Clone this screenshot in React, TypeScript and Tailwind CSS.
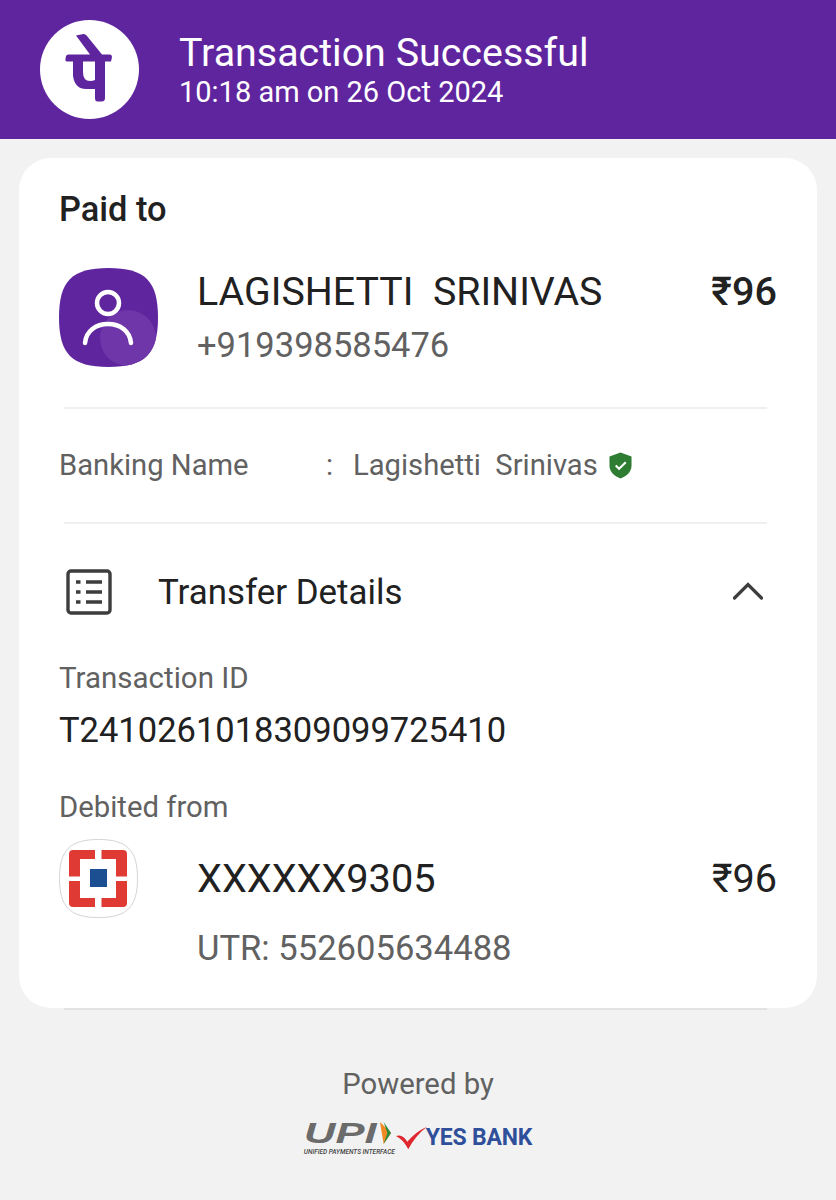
// ─── Logos ───────────────────────────────────────────────────────────────────

function PhonePeMark() {
  return (
    <svg viewBox="0 0 99 99" className="size-[99px]">
      <circle cx="49.5" cy="49.5" r="49.5" fill="#fff" />
      <path
        d="M36 15.5 L43.5 14 Q45.5 14 47 16 L62 34.5 L70 34.5 Q72 34.5 72 37 L71 41.5 Q70.5 41.5 65 41.5 L65 78 Q65 81.5 61.5 81.5 L57.5 81.5 Q55 81.5 55 78 L55 69 Q53 69 46 69 Q35 69 33 56 L33 41.5 L27 41.5 Q25 41.5 25.5 39 L26 36 Q26.5 34.5 28.5 34.5 L50 34.5 Z M43 41.5 L43 52 Q43 61 50 61 Q53 61 55 60 L55 41.5 Z"
        fill="#5f259f"
        fillRule="evenodd"
      />
    </svg>
  );
}

function PayeeAvatar() {
  return (
    <svg viewBox="0 0 99 99" className="size-[99px] shrink-0">
      <defs>
        <clipPath id="squircle">
          <path d="M49.5 0 C86 0 99 13 99 49.5 C99 86 86 99 49.5 99 C13 99 0 86 0 49.5 C0 13 13 0 49.5 0 Z" />
        </clipPath>
      </defs>
      <g clipPath="url(#squircle)">
        <rect width="99" height="99" fill="#5f259f" />
        <circle cx="69" cy="70" r="28" fill="#6f36a9" />
      </g>
      <circle cx="49" cy="35" r="11" fill="none" stroke="#fff" strokeWidth="4.5" />
      <path d="M26 75 C27 63 37 56 49 56 C61 56 71 63 72 75" fill="none" stroke="#fff" strokeWidth="4.5" strokeLinecap="round" />
    </svg>
  );
}

function HdfcLogo() {
  return (
    <svg viewBox="0 0 79 79" className="size-[79px] shrink-0">
      <path d="M39.5 .5 C68 .5 78.5 11 78.5 39.5 C78.5 68 68 78.5 39.5 78.5 C11 78.5 .5 68 .5 39.5 C.5 11 11 .5 39.5 .5 Z" fill="#fff" stroke="#d4d4d4" />
      <path d="M10 15 Q10 11 14 11 L36 11 L36 20 L21 20 L21 37.5 L10 37.5 Z" fill="#df3b34" />
      <path d="M68 15 Q68 11 64 11 L42.5 11 L42.5 20 L57 20 L57 37.5 L68 37.5 Z" fill="#df3b34" />
      <path d="M10 64 Q10 68 14 68 L36 68 L36 59 L21 59 L21 42 L10 42 Z" fill="#df3b34" />
      <path d="M68 64 Q68 68 64 68 L42.5 68 L42.5 59 L57 59 L57 42 L68 42 Z" fill="#df3b34" />
      <rect x="31" y="30" width="17" height="18" fill="#1c4f92" />
    </svg>
  );
}

function ListIcon() {
  return (
    <svg viewBox="0 0 46 46" className="size-[46px] shrink-0" fill="none" stroke="#3d3d3d">
      <rect x="2" y="2" width="42" height="42" rx="3" strokeWidth="3.4" />
      <path d="M10 13h4.5M10 23h4.5M10 33h4.5M20 13h16M20 23h16M20 33h16" strokeWidth="3.4" />
    </svg>
  );
}

function VerifiedShield() {
  return (
    <svg viewBox="0 0 24 28" className="h-[27px] w-[23px]">
      <path d="M12 .5 L23.5 4.5 L23.5 14 C23.5 21 18 25.5 12 27.5 C6 25.5 .5 21 .5 14 L.5 4.5 Z" fill="#2e7d32" />
      <path d="M7 14 L10.5 17.5 L17.5 10.5" fill="none" stroke="#fff" strokeWidth="2.2" />
    </svg>
  );
}

function CaretUp() {
  return (
    <svg viewBox="0 0 30 18" className="mb-[2px] h-[18px] w-[30px] shrink-0" fill="none" stroke="#3d3d3d" strokeWidth="3.2" strokeLinecap="round">
      <path d="M1.5 16 L15 2.5 L28.5 16" />
    </svg>
  );
}

function PartnerLogos() {
  return (
    <div className="flex items-center justify-center">
      <div className="flex w-[88px] flex-col items-start">
        <div className="flex w-full items-center justify-between">
          <span className="origin-left scale-x-[1.45] font-['Liberation_Sans',sans-serif] text-[30px] leading-[26px] font-bold text-[#6b6b6b] italic">UPI</span>
          <svg viewBox="0 0 14 26" className="h-[24px] w-[13px]">
            <path d="M1 1 L13 13 L5 25 Z" fill="#f08a24" />
            <path d="M5 1 L13 13 L5 25 L9 13 Z" fill="#2c8a3f" />
          </svg>
        </div>
        <span className="mt-[3px] text-[6.5px] leading-[7px] font-medium whitespace-nowrap text-[#444] italic">UNIFIED PAYMENTS INTERFACE</span>
      </div>
      <svg viewBox="0 0 34 24" className="ml-[4px] h-[24px] w-[32px]">
        <path d="M0 10 C5 8 9 11 12 16 C18 9 24 4 33 0 C25 6 18 14 13 24 C10 18 6 13 0 10 Z" fill="#e0262f" />
      </svg>
      <span className="-ml-[2px] text-[23px] leading-[28px] font-bold tracking-[-0.2px] text-[#2f4f9a]">YES BANK</span>
    </div>
  );
}

// ─── Page ────────────────────────────────────────────────────────────────────

function Divider({ tone = "bg-[#efefef]" }: { tone?: string }) {
  return <div className={`mr-[50px] ml-[45px] h-[2px] ${tone}`} />;
}

export default function App() {
  return (
    <div className="flex h-[1200px] w-[836px] flex-col overflow-hidden bg-[#f2f2f2] font-['Roboto',sans-serif]">
      {/* Header */}
      <header className="flex h-[139px] shrink-0 items-center gap-[40px] bg-[#5f259f] pb-[1px] pl-[40px]">
        <PhonePeMark />
        <div className="pt-[3px] text-white">
          <p className="text-[39.4px] leading-[42px]">Transaction Successful</p>
          <p className="text-[29px] leading-[36px]">10:18 am on 26 Oct 2024</p>
        </div>
      </header>

      {/* Receipt card */}
      <main className="relative mx-[19px] mt-[19px] h-[850px] shrink-0 rounded-[32px] bg-white">
        <h2 className="px-[40px] pt-[31px] text-[34.4px] leading-[40px] font-medium text-[#212121]">Paid to</h2>

        <div className="mt-[39px] flex items-start px-[40px]">
          <PayeeAvatar />
          <div className="ml-[39px] flex-1 pt-[1px]">
            <p className="text-[39.3px] leading-[46px] whitespace-pre text-[#212121]">LAGISHETTI  SRINIVAS</p>
            <p className="mt-[10px] text-[34.5px] leading-[40px] text-[#616161]">+919398585476</p>
          </div>
          <span className="pt-[1px] text-[39.6px] leading-[46px] font-medium text-[#212121]">₹96</span>
        </div>

        <div className="mt-[40px]">
          <Divider />
        </div>

        <div className="flex h-[113px] items-center px-[40px] text-[29.2px] text-[#616161]">
          <span className="w-[267px]">Banking Name</span>
          <span className="w-[27px]">:</span>
          <span className="whitespace-pre">Lagishetti  Srinivas</span>
          <span className="ml-[11px] flex">
            <VerifiedShield />
          </span>
        </div>

        <Divider />

        <div className="flex h-[135px] items-center pr-[54px] pl-[47px]">
          <ListIcon />
          <p className="ml-[46px] flex-1 pt-[3px] text-[34.9px] text-[#212121]">Transfer Details</p>
          <CaretUp />
        </div>

        <div className="px-[40px] pt-[1px]">
          <p className="text-[29.5px] leading-[36px] text-[#616161]">Transaction ID</p>
          <p className="mt-[13px] text-[34.5px] leading-[42px] text-[#212121]">T2410261018309099725410</p>
          <p className="mt-[38px] text-[29.3px] leading-[36px] text-[#616161]">Debited from</p>

          <div className="mt-[14px] flex items-start">
            <HdfcLogo />
            <div className="ml-[59px] flex-1 pt-[17px]">
              <p className="text-[39.7px] leading-[46px] text-[#212121]">XXXXXX9305</p>
              <p className="mt-[26px] text-[34.6px] leading-[40px] text-[#616161]">UTR: 552605634488</p>
            </div>
            <span className="pt-[17px] text-[39.6px] leading-[46px] text-[#212121]">₹96</span>
          </div>
        </div>

        <div className="absolute inset-x-0 -bottom-[2px]">
          <Divider tone="bg-[#e2e2e2]" />
        </div>
      </main>

      {/* Footer */}
      <footer className="mt-[58px] flex flex-col items-center">
        <p className="text-[29.3px] leading-[36px] text-[#616161]">Powered by</p>
        <div className="mt-[18px]">
          <PartnerLogos />
        </div>
      </footer>
    </div>
  );
}
